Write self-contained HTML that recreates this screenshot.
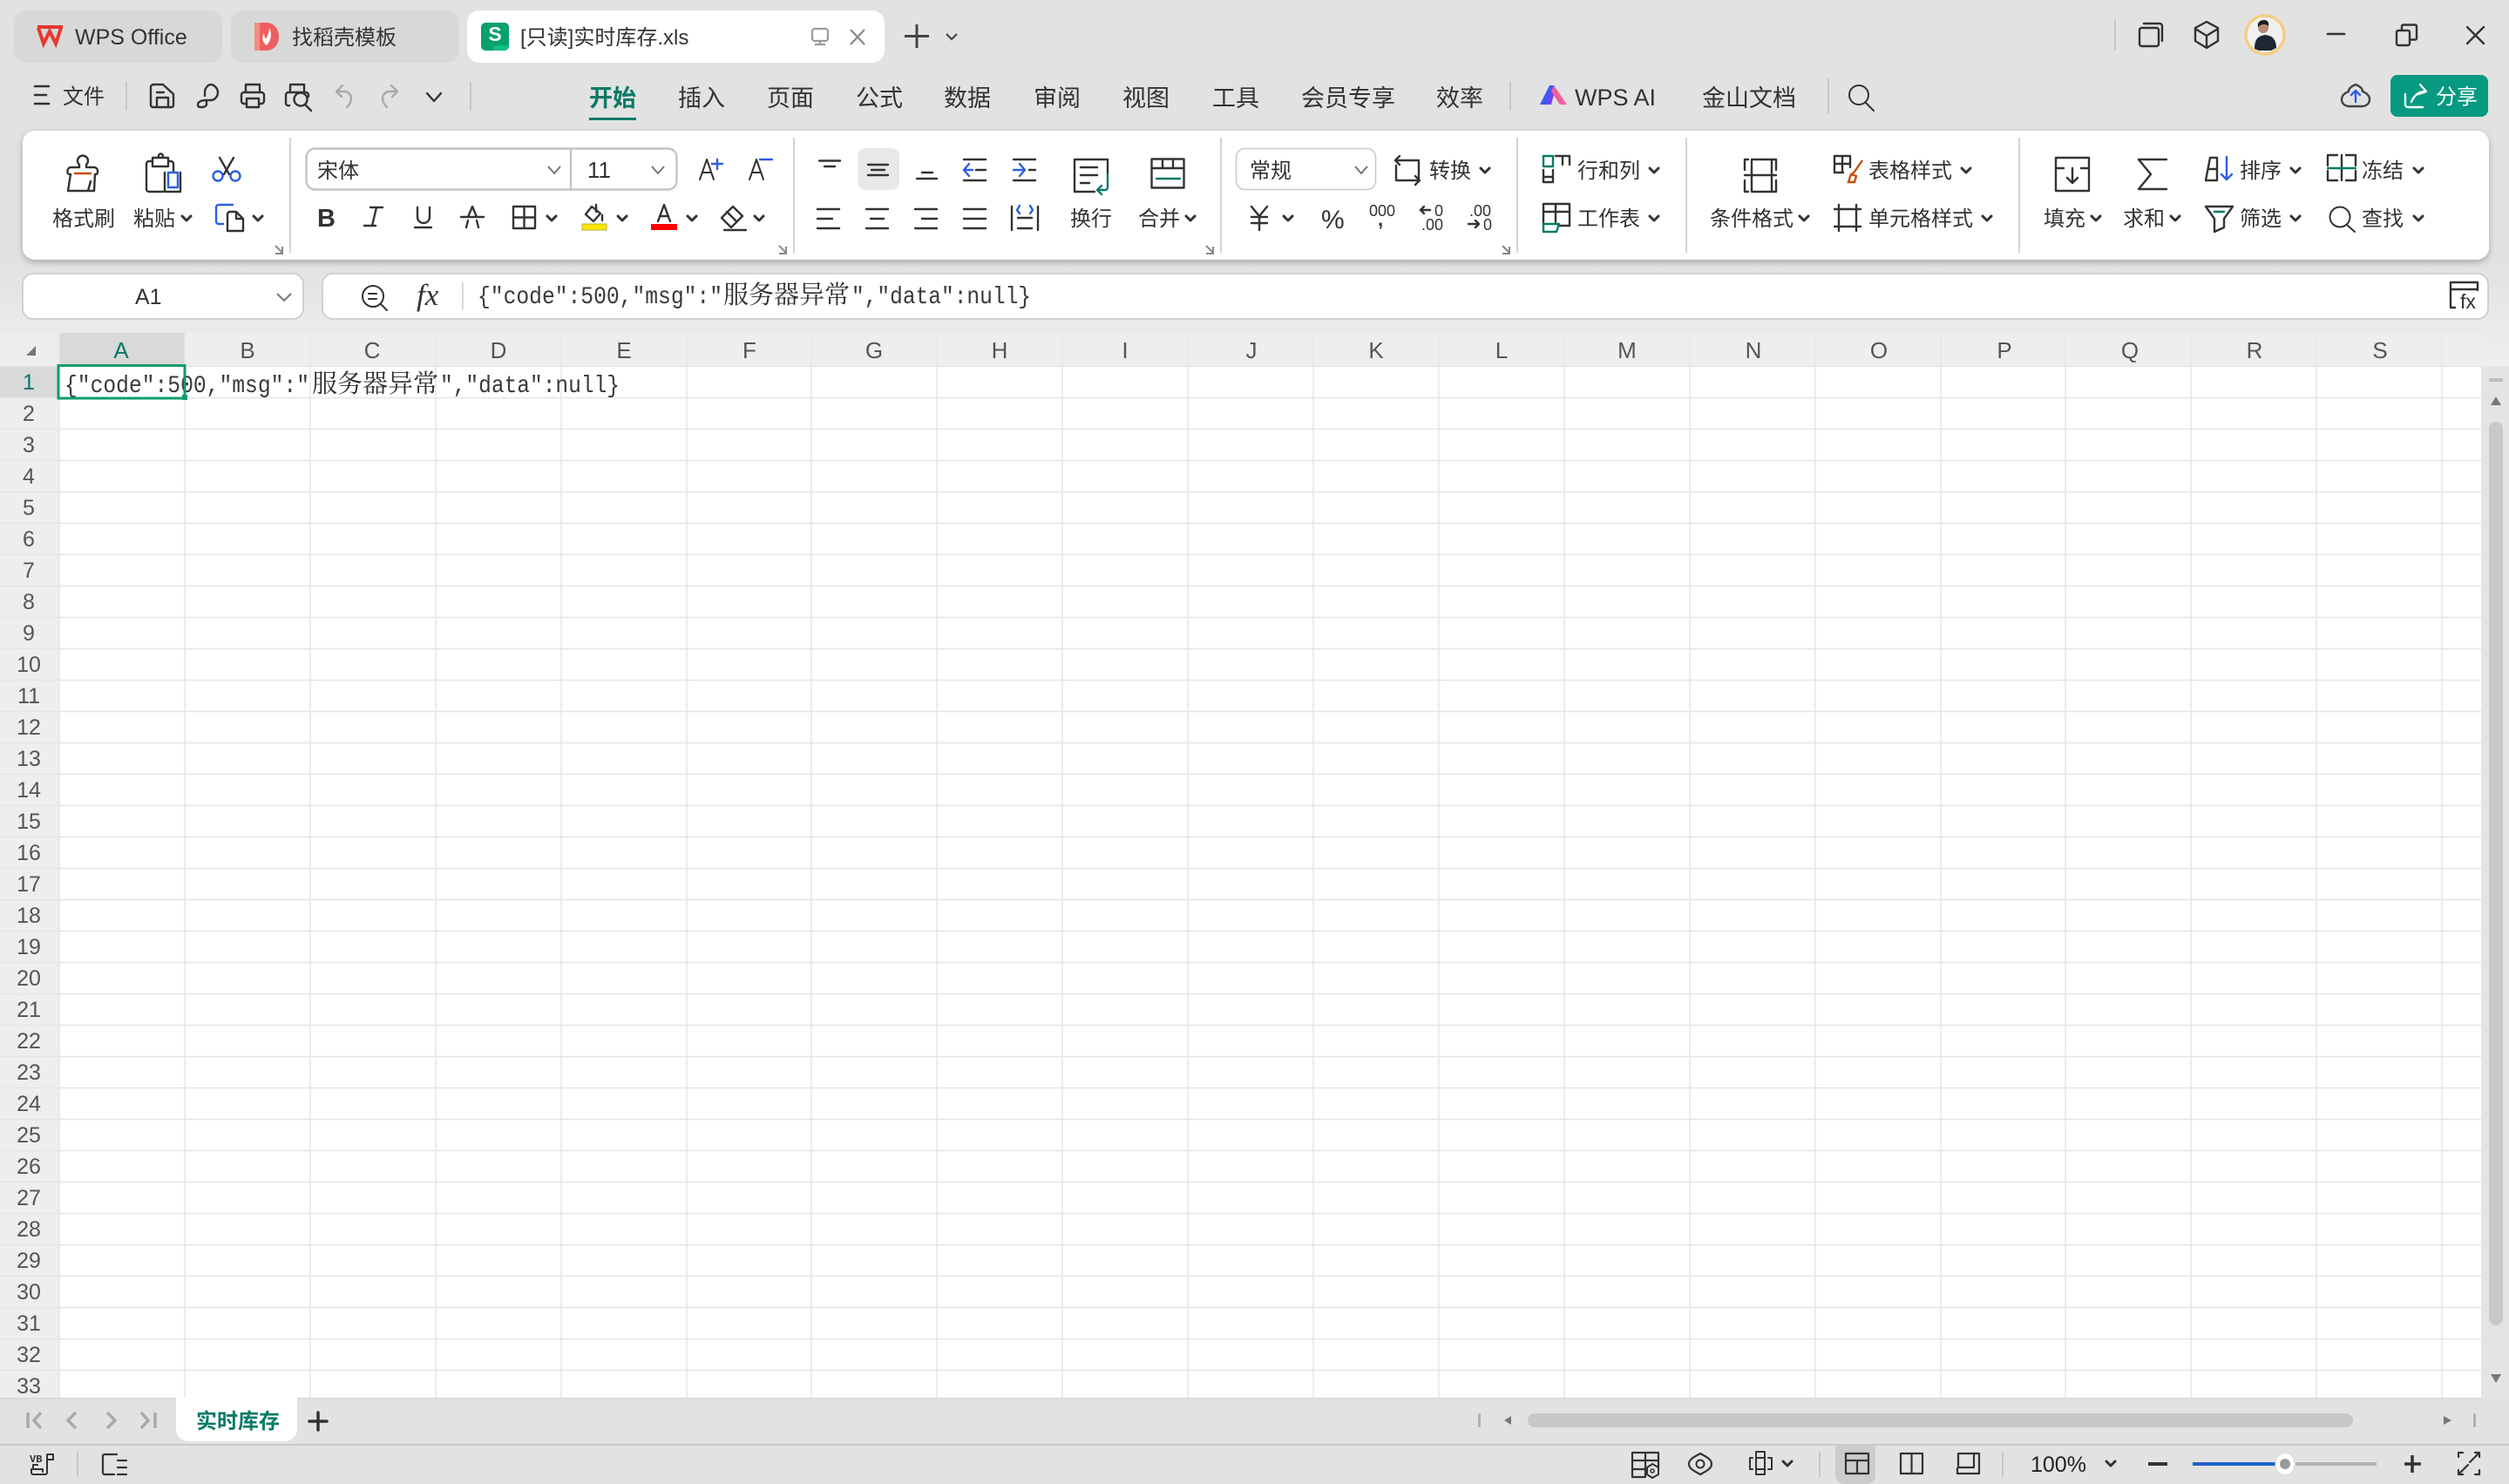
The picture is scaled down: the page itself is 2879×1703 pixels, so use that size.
<!DOCTYPE html>
<html lang="zh-CN"><head><meta charset="utf-8"><title>实时库存.xls</title>
<style>
html,body{margin:0;padding:0;background:#e2e2e2}
svg{display:block}
text{font-family:"Liberation Sans","Noto Sans CJK SC",sans-serif;fill:#333;font-size:24px}
.i{fill:none;stroke:#333;stroke-width:2.4;stroke-linecap:round;stroke-linejoin:round}
.b{fill:none;stroke:#2b5fe0;stroke-width:2.4;stroke-linecap:round;stroke-linejoin:round}
.g{fill:none;stroke:#067a66;stroke-width:2.4;stroke-linecap:round;stroke-linejoin:round}
.m{fill:none;stroke:#c7c7c7;stroke-width:2}
.tab{font-size:27px}
.hd{font-size:26px;text-anchor:middle;fill:#555}
.rn{font-size:25px;text-anchor:middle;fill:#555}
.mono{font-family:"Liberation Mono",monospace;font-size:28px;fill:#3a3a3a}
.cj{font-family:"Liberation Serif","Noto Serif CJK SC",serif;font-size:29px;fill:#2f2f2f}
</style></head><body>
<svg width="2879" height="1703" viewBox="0 0 2879 1703" xmlns="http://www.w3.org/2000/svg">
<defs>
<linearGradient id="bg" x1="0" y1="0" x2="0" y2="1"><stop offset="0" stop-color="#e2e2e2"/><stop offset=".72" stop-color="#e2e2e2"/><stop offset="1" stop-color="#efefef"/></linearGradient>
<filter id="sh" x="-2%" y="-20%" width="104%" height="140%"><feDropShadow dx="0" dy="3" stdDeviation="4" flood-color="#000" flood-opacity=".26"/></filter>
<path id="c" d="M0 0l5 5 5-5" fill="none" stroke="#333" stroke-width="3" stroke-linecap="round" stroke-linejoin="round"/>
</defs>
<rect width="2879" height="420" fill="url(#bg)"/>

<!-- tabs -->
<rect x="16" y="12" width="239" height="60" rx="14" fill="#d8d8d8"/>
<rect x="265" y="12" width="262" height="60" rx="14" fill="#d8d8d8"/>
<rect x="536" y="12" width="479" height="60" rx="14" fill="#fff"/>
<path d="M43 31h29M44 32l6 18 7-14 7 14 6-18" fill="none" stroke="#e8362d" stroke-width="4" stroke-linejoin="miter"/>
<text x="86" y="51" style="font-size:25px">WPS Office</text>
<path d="M292 26h14c8 0 14 7 14 16s-6 16-14 16h-14z" fill="#ee5f5f"/><path d="M292 26h6v32h-6z" fill="#f58a85"/>
<path d="M309 32c3 6 3 13-3 20-5-3-6-9-3-14 0 3 1 5 2 7 2-4 4-8 4-13z" fill="#fff"/>
<text x="335" y="51">找稻壳模板</text>
<rect x="552" y="26" width="32" height="32" rx="5" fill="#07a06f"/><path d="M566 52h18v1a5 5 0 0 1-5 5h-13z" fill="#10bd80"/>
<text x="568" y="47" text-anchor="middle" style="font-size:23px;font-weight:700;fill:#fff">S</text>
<text x="597" y="51" style="font-size:24px">[只读]实时库存.xls</text>
<rect x="932" y="33" width="18" height="14" rx="3" fill="none" stroke="#999" stroke-width="2.2"/><path d="M941 47v4M935 51h12" fill="none" stroke="#999" stroke-width="2.2"/>
<path d="M976 34l16 17M992 34l-16 17" fill="none" stroke="#888" stroke-width="2.2"/>
<path d="M1052 28v27M1038 41.500h28" fill="none" stroke="#444" stroke-width="3"/>
<path d="M1086 39l6 6 6-6" fill="none" stroke="#444" stroke-width="2.2"/>

<!-- title bar right -->
<path d="M2427 22v36" class="m"/>
<rect x="2455" y="32" width="22" height="21" rx="2.500" class="i"/><path d="M2460 27h18a3 3 0 0 1 3 3v17" class="i"/>
<path d="M2532 25l13 7v15l-13 8-13-8v-15zM2519 33l13 8 13-8M2532 41v14" class="i"/>
<circle cx="2599" cy="40" r="22" fill="#f1f1f1" stroke="#f5cd85" stroke-width="3.500"/>
<path d="M2587 56c0-8 2-13 8-15l4-1 5 1c6 2 8 8 8 14l-6 3h-14z" fill="#1c2733"/>
<circle cx="2597" cy="32" r="6" fill="#b98a72"/><path d="M2591 31c-1-6 3-8 7-8s6 3 5 7c-3-3-8-3-12 1z" fill="#1d1d1d"/>
<path d="M2671 39h19" class="i" style="stroke-width:2.600"/>
<rect x="2750" y="35" width="15" height="17" rx="2" class="i"/><path d="M2756 35v-5a1.500 1.500 0 0 1 1.500-1.500h14a1.500 1.500 0 0 1 1.500 1.500v14a1.500 1.500 0 0 1-1.500 1.500h-6.500" class="i"/>
<path d="M2831 31l19 19M2850 31l-19 19" class="i"/>

<!-- menu row -->
<path d="M40 99h16M40 109h13M40 119h16" class="i" style="stroke-width:2.600"/>
<text x="72" y="119">文件</text>
<path d="M145 94v33M540 94v33M1733 94v33M2098 90v40" class="m"/>
<path d="M176 97h11l12 11v13a2 2 0 0 1-2 2h-21a3 3 0 0 1-3-2v-21a3 3 0 0 1 3-3zM180 123v-11h13v11M180 106h8" class="i"/>
<path d="M235 110v-4c0-5 4-9 7-9s8 4 8 9-4 9-8 9h-6c-5 0-9 2-9 5s2 3 5 3 5-2 5-3v-5" class="i"/>
<path d="M282 106v-9h16v9M283 119h-3a3 3 0 0 1-3-3v-7a3 3 0 0 1 3-3h20a3 3 0 0 1 3 3v7a3 3 0 0 1-3 3h-3M283 113h14v10h-14z" class="i"/>
<path d="M333 106v-9h16v9M332 121a3 3 0 0 1-4-3v-9a3 3 0 0 1 3-3h20a3 3 0 0 1 3 3v2" class="i"/><circle cx="345" cy="114" r="7.500" class="i"/><path d="M350 120l7 7" class="i"/>
<path d="M393 98l-7 7 6 6M386 105h9a8 8 0 0 1 8 8c0 3-2 7-5 10" fill="none" stroke="#aaa" stroke-width="2.400" stroke-linecap="round" stroke-linejoin="round"/>
<path d="M449 98l7 7-6 6M456 105h-9a8 8 0 0 0-8 8c0 3 2 7 5 10" fill="none" stroke="#aaa" stroke-width="2.400" stroke-linecap="round" stroke-linejoin="round"/>
<path d="M490 107l8 9 8-9" class="i"/>

<text x="676" y="122" class="tab" style="font-weight:700;fill:#067a66">开始</text>
<rect x="676" y="135" width="54" height="3" fill="#067a66"/>
<text x="778" y="122" class="tab">插入</text>
<text x="880" y="122" class="tab">页面</text>
<text x="982" y="122" class="tab">公式</text>
<text x="1083" y="122" class="tab">数据</text>
<text x="1186" y="122" class="tab">审阅</text>
<text x="1288" y="122" class="tab">视图</text>
<text x="1391" y="122" class="tab">工具</text>
<text x="1493" y="122" class="tab">会员专享</text>
<text x="1648" y="122" class="tab">效率</text>
<path d="M1767 120l11-22h6l-9 22z" fill="#3b5bf5"/><path d="M1783 98l15 22h-8l-10-15z" fill="#ef5fa0"/><path d="M1775 120l5-15 3 4-3 11z" fill="#7a3ff0"/>
<text x="1807" y="121" class="tab">WPS AI</text>
<text x="1953" y="122" class="tab">金山文档</text>
<circle cx="2133" cy="109" r="11" class="i" style="stroke-width:2"/><path d="M2141 118l9 9" class="i" style="stroke-width:2"/>

<path d="M2703 97c-5 2-8 5-8 8-5 2-8 5-8 9 0 5 4 8 9 8h14c5 0 9-3 9-8 0-4-3-7-8-9 0-3-3-6-8-8z" class="i" style="stroke:#444"/>
<path d="M2703 117v-13M2698 109l5-5 5 5" class="b"/>
<rect x="2743" y="86" width="112" height="48" rx="8" fill="#069a80"/>
<path d="M2777 97l7 8-9 3M2784 105c-8 0-14 4-17 12M2760 108v12a3 3 0 0 0 3 3h17" fill="none" stroke="#fff" stroke-width="2.400" stroke-linecap="round" stroke-linejoin="round"/>
<text x="2795" y="119" style="fill:#fff">分享</text>

<!-- ribbon -->
<rect x="26" y="150" width="2830" height="148" rx="14" fill="#fff" filter="url(#sh)"/>
<path d="M333 158v132M911 158v132M1401 158v132M1741 158v132M1935 158v132M2317 158v132" fill="none" stroke="#d4d4d4" stroke-width="2"/>
<!-- launchers -->
<path d="M316 282l8 8M324 283v8h-8M894 282l8 8M902 283v8h-8M1384 282l8 8M1392 283v8h-8M1724 282l8 8M1732 283v8h-8" fill="none" stroke="#888" stroke-width="2"/>

<!-- clipboard -->
<path d="M91 192v-3a6 6 0 1 1 8 0v3h9a4 4 0 0 1 4 4v2a2 2 0 0 1-2 2h-1l-1 19H78l3-19h-1a2.500 2.500 0 0 1-2.500-2.500v-1.500a4 4 0 0 1 4-4zM104 208l-3 11" class="i"/>
<path d="M85 199h20" fill="none" stroke="#c24e12" stroke-width="2.400"/>
<text x="60" y="259">格式刷</text>
<path d="M175 185h-4a3 3 0 0 0-3 3v29a3 3 0 0 0 3 3h16M193 185h3a3 3 0 0 1 3 3v10M175 181h18v10h-18zM182 181v-2a2 2 0 0 1 5 0v2M189 198v22h18v-22" class="i"/>
<rect x="193" y="198" width="11" height="17" class="b"/>
<text x="153" y="259">粘贴</text><use href="#c" x="209" y="248"/>
<circle cx="250" cy="202" r="5.500" class="b"/><circle cx="270" cy="202" r="5.500" class="b"/>
<path d="M252 181l11 19M268 181l-11 19" class="i"/>
<path d="M267 235h-16a3 3 0 0 0-3 3v16a3 3 0 0 0 3 3h5" class="b"/>
<path d="M263 243h8l8 8v14h-18v-20zM271 243v8h8" class="i"/>
<use href="#c" x="291" y="248"/>

<!-- font -->
<rect x="351.500" y="170.500" width="425" height="47" rx="10" fill="#fff" stroke="#c4c4c4" stroke-width="2.400"/>
<path d="M655 171v46" stroke="#c4c4c4" stroke-width="2.400"/>
<text x="364" y="204">宋体</text>
<path d="M629 191l7 8 7-8M748 191l7 8 7-8" fill="none" stroke="#777" stroke-width="2"/>
<text x="674" y="204" style="font-size:26px">11</text>
<path d="M803 206l8-23 8 23M806 198h10M860 206l8-23 8 23M863 198h10" class="i" style="stroke-width:2"/>
<path d="M823 183v11M817 188h12M872 183h14" class="b"/>
<text x="364" y="260" style="font-size:29px;font-weight:700">B</text>
<path d="M425 238h14M432 238l-5 21M418 259h13" class="i"/>
<path d="M479 238v11a7 7 0 0 0 14 0v-11M476 261h19" class="i"/>
<path d="M537 249l5-12 5 12M535 261l2-8M549 261l-2-8M529 249h26" class="i"/>
<path d="M589 237h25v25h-25zM589 249.500h25M601.500 237v25" class="i"/><use href="#c" x="628" y="248"/>
<path d="M679 237l10 8-8 9-9-8zM684 235v8" class="i"/><path d="M691 247v6" class="i"/>
<rect x="668" y="257" width="28" height="7" fill="#ffe600" stroke="#b8b04a" stroke-width="1"/><use href="#c" x="709" y="248"/>
<path d="M755 254l7-19 7 19M757 248h10" class="i"/><rect x="747" y="257" width="30" height="7" fill="#f00"/><use href="#c" x="789" y="248"/>
<path d="M841 237l11 11-13 13-11-11zM834 243l11 11M831 264h25" class="i"/><use href="#c" x="866" y="248"/>

<!-- align -->
<rect x="984" y="170" width="48" height="48" rx="9" fill="#e8e8e8"/>
<path d="M940 184.500h24M946 191h12M996 189h23M1000 195h15M996 201h23M1058 198h12M1052 205h23" class="i"/>
<path d="M1106 183h25M1120 195h11M1106 207h25M1163 183h25M1181 195h7M1163 207h25" class="i"/>
<path d="M1116 195h-10M1112 188l-6 7 6 7M1163 195h12M1170 188l6 7-6 7" class="b"/>
<path d="M1271 200v-17h-38v37h23M1240 192h19M1240 201h19M1240 210h10" class="i"/>
<path d="M1271 200v15a3 3 0 0 1-3 3h-9M1264 213l-5 5 5 5" class="g"/>
<text x="1228" y="259">换行</text>
<path d="M1321.500 182.500h37v33h-37zM1321.500 193h37M1334 182.500v10.500M1346 182.500v10.500" class="i"/>
<path d="M1327 205h27" class="g"/>
<text x="1306" y="259">合并</text><use href="#c" x="1361" y="248"/>
<path d="M938 240h25M938 251h17M938 262h25M994 240h25M999 251h15M994 262h25M1050 240h25M1058 251h17M1050 262h25M1106 240h25M1106 251h25M1106 262h25" class="i"/>
<path d="M1161 237v27M1191 237v27M1168 250h16M1168 262h16" class="i"/><path d="M1170 236l-3 5 3 4M1182 236l3 5-3 4" class="b"/>

<!-- number -->
<rect x="1418.500" y="170.500" width="160" height="47" rx="10" fill="#fff" stroke="#c8c8c8" stroke-width="1.500"/>
<text x="1434" y="204">常规</text>
<path d="M1555 191l7 8 7-8" fill="none" stroke="#777" stroke-width="2"/>
<path d="M1606 179l-5 5 5 5M1602 184h26v22M1602 190v17h26M1624 202l5 5-5 5" class="i"/>
<text x="1640" y="204">转换</text><use href="#c" x="1699" y="193"/>
<path d="M1436 237l9 11 9-11M1445 248v16M1436 249h18M1436 256h18" class="i"/><use href="#c" x="1473" y="248"/>
<text x="1516" y="262" style="font-size:30px">%</text>
<text x="1571" y="248" style="font-size:18px">000</text><text x="1581" y="259" style="font-size:22px;font-weight:700">,</text>
<path d="M1641 241h-11M1634 237l-4 4 4 4" class="i"/><text x="1646" y="248" style="font-size:18px">0</text><text x="1631" y="264" style="font-size:18px">.00</text>
<text x="1686" y="248" style="font-size:18px">.00</text><path d="M1685 257h12M1693 253l4 4-4 4" class="i"/><text x="1702" y="264" style="font-size:18px">0</text>

<!-- row col / sheet -->
<rect x="1771" y="179" width="11" height="12" class="g"/>
<path d="M1785 179h16v10M1793 179v10M1771 195v14h11v-14M1771 203h11" class="i"/>
<text x="1810" y="204">行和列</text><use href="#c" x="1893" y="193"/>
<path d="M1771 257v-23h30v25h-13M1771 243h30M1785 234v21" class="i"/>
<path d="M1771 257h18l-3 9h-15z" class="g"/>
<text x="1810" y="259">工作表</text><use href="#c" x="1893" y="248"/>

<!-- conditional -->
<path d="M2006 183h-4v12M2002 207v13h4M2034 183h4v12M2038 207v13h-4M2010 183h23v18h-31M2010 183v37M2010 220h23v-19M2033 201h5" class="i"/>
<text x="1962" y="259">条件格式</text><use href="#c" x="2065" y="248"/>
<path d="M2123 192v-13h-18v19h10M2105 188h18M2114 179v19" class="i"/>
<path d="M2137 184l-9 13-3 3" fill="none" stroke="#c24e12" stroke-width="2.400"/><path d="M2121 209l3-9 6 2-2 7z" fill="none" stroke="#c24e12" stroke-width="2.400"/>
<text x="2144" y="204">表格样式</text><use href="#c" x="2251" y="193"/>
<path d="M2110 235v30M2130 235v30M2105 240h30M2105 260h30" class="i"/>
<text x="2144" y="259">单元格样式</text><use href="#c" x="2275" y="248"/>

<!-- editing -->
<path d="M2359 181h38v38h-38zM2359 193h9M2388 193h9M2378 193v17M2372 204l6 6 6-6" class="i"/>
<text x="2345" y="259">填充</text><use href="#c" x="2400" y="248"/>
<path d="M2486 183h-32l14 17-14 17h32" class="i"/>
<text x="2436" y="259">求和</text><use href="#c" x="2491" y="248"/>
<path d="M2531 207l5-26h8v26zM2534 194h10" class="i"/><path d="M2555 180v26M2549 200l6 6 6-6" class="b"/>
<text x="2570" y="204">排序</text><use href="#c" x="2629" y="193"/>
<path d="M2671 190v-12h11M2692 178h11v12M2671 196v11h11M2692 207h11v-11M2687 178v29" class="i"/><path d="M2671 193h32" class="g"/>
<text x="2710" y="204">冻结</text><use href="#c" x="2770" y="193"/>
<path d="M2531 237h31l-10 14v10l-11 5v-15z" class="i"/><path d="M2541 243h11" class="g"/>
<text x="2570" y="259">筛选</text><use href="#c" x="2629" y="248"/>
<circle cx="2685" cy="249" r="11.500" class="i" style="stroke-width:2"/><path d="M2693 258l9 8" class="i" style="stroke-width:2"/>
<text x="2710" y="259">查找</text><use href="#c" x="2770" y="248"/>

<!-- name + formula -->
<rect x="26" y="314" width="322" height="52" rx="12" fill="#fff" stroke="#c9c9c9" stroke-width="1.600"/>
<text x="155" y="349" style="font-size:25px">A1</text>
<path d="M318 337l8 8 8-8" fill="none" stroke="#777" stroke-width="2"/>
<rect x="370" y="314" width="2485" height="52" rx="12" fill="#fff" stroke="#c9c9c9" stroke-width="1.600"/>
<circle cx="428" cy="340" r="12" class="i" style="stroke-width:2"/><path d="M423 337h9M423 343h9M437 349l7 7" class="i" style="stroke-width:2"/>
<text x="478" y="350" style="font-family:'Liberation Serif',serif;font-style:italic;font-size:35px">fx</text>
<path d="M531 324v31" stroke="#ccc" stroke-width="1.500"/>
<text x="548" y="348" class="mono" textLength="281" lengthAdjust="spacingAndGlyphs">{"code":500,"msg":"</text>
<text x="830" y="348" class="cj">服务器异常</text>
<text x="977" y="348" class="mono" textLength="206" lengthAdjust="spacingAndGlyphs">","data":null}</text>
<path d="M2817 353h-5v-29h31v9M2812 332h31" class="i"/>
<text x="2823" y="354" style="font-size:23px">fx</text>

<!-- sheet -->
<rect x="0" y="382" width="2847" height="38" fill="#eee"/>
<rect x="0" y="420" width="68" height="1184" fill="#eee"/>
<rect x="68" y="420" width="2779" height="1184" fill="#fff"/>
<rect x="68" y="382" width="144" height="38" fill="#d9d9d9"/>
<rect x="0" y="420" width="68" height="37" fill="#d9d9d9"/>
<path d="M41 397v11h-11z" fill="#777"/>
<path d="M68 382V1604M212 382V1604M356 382V1604M500 382V1604M644 382V1604M788 382V1604M931 382V1604M1075 382V1604M1219 382V1604M1363 382V1604M1507 382V1604M1651 382V1604M1795 382V1604M1939 382V1604M2083 382V1604M2227 382V1604M2370 382V1604M2514 382V1604M2658 382V1604M2802 382V1604" fill="none" stroke="#e5e5e5" stroke-width="1.500"/>
<path d="M0 420.500H2847M0 456.500H2847M0 492.500H2847M0 528.500H2847M0 564.500H2847M0 600.500H2847M0 636.500H2847M0 672.500H2847M0 708.500H2847M0 744.500H2847M0 780.500H2847M0 816.500H2847M0 852.500H2847M0 888.500H2847M0 924.500H2847M0 960.500H2847M0 996.500H2847M0 1032.500H2847M0 1068.500H2847M0 1104.500H2847M0 1140.500H2847M0 1176.500H2847M0 1212.500H2847M0 1248.500H2847M0 1284.500H2847M0 1320.500H2847M0 1356.500H2847M0 1392.500H2847M0 1428.500H2847M0 1464.500H2847M0 1500.500H2847M0 1536.500H2847M0 1572.500H2847" fill="none" stroke="#e5e5e5" stroke-width="1.500"/>
<text x="139" y="411" class="hd" style="fill:#067a66">A</text><text x="284" y="411" class="hd">B</text><text x="427" y="411" class="hd">C</text><text x="572" y="411" class="hd">D</text><text x="716" y="411" class="hd">E</text><text x="860" y="411" class="hd">F</text><text x="1003" y="411" class="hd">G</text><text x="1147" y="411" class="hd">H</text><text x="1291" y="411" class="hd">I</text><text x="1436" y="411" class="hd">J</text><text x="1579" y="411" class="hd">K</text><text x="1723" y="411" class="hd">L</text><text x="1867" y="411" class="hd">M</text><text x="2012" y="411" class="hd">N</text><text x="2156" y="411" class="hd">O</text><text x="2300" y="411" class="hd">P</text><text x="2444" y="411" class="hd">Q</text><text x="2587" y="411" class="hd">R</text><text x="2731" y="411" class="hd">S</text>
<g class="rows">
<text x="33" y="447" class="rn" style="fill:#067a66">1</text><text x="33" y="483" class="rn">2</text><text x="33" y="519" class="rn">3</text><text x="33" y="555" class="rn">4</text><text x="33" y="591" class="rn">5</text><text x="33" y="627" class="rn">6</text><text x="33" y="663" class="rn">7</text><text x="33" y="699" class="rn">8</text><text x="33" y="735" class="rn">9</text><text x="33" y="771" class="rn">10</text><text x="33" y="807" class="rn">11</text><text x="33" y="843" class="rn">12</text><text x="33" y="879" class="rn">13</text><text x="33" y="915" class="rn">14</text><text x="33" y="951" class="rn">15</text><text x="33" y="987" class="rn">16</text><text x="33" y="1023" class="rn">17</text><text x="33" y="1059" class="rn">18</text><text x="33" y="1095" class="rn">19</text><text x="33" y="1131" class="rn">20</text><text x="33" y="1167" class="rn">21</text><text x="33" y="1203" class="rn">22</text><text x="33" y="1239" class="rn">23</text><text x="33" y="1275" class="rn">24</text><text x="33" y="1311" class="rn">25</text><text x="33" y="1347" class="rn">26</text><text x="33" y="1383" class="rn">27</text><text x="33" y="1419" class="rn">28</text><text x="33" y="1455" class="rn">29</text><text x="33" y="1491" class="rn">30</text><text x="33" y="1527" class="rn">31</text><text x="33" y="1563" class="rn">32</text><text x="33" y="1599" class="rn">33</text>
</g>
<text x="74" y="450" class="mono" textLength="281" lengthAdjust="spacingAndGlyphs">{"code":500,"msg":"</text>
<text x="358" y="450" class="cj">服务器异常</text>
<text x="505" y="450" class="mono" textLength="206" lengthAdjust="spacingAndGlyphs">","data":null}</text>
<rect x="67" y="419.500" width="145" height="37.500" fill="none" stroke="#0f9b6c" stroke-width="3"/>
<rect x="209" y="453" width="6" height="6" fill="#0f9b6c"/>

<!-- v scrollbar -->
<rect x="2847" y="420" width="32" height="1184" fill="#e4e4e4"/>
<rect x="2856" y="434" width="16" height="4" rx="2" fill="#bdbdbd"/>
<path d="M2864 455l6 10h-12z" fill="#777"/>
<rect x="2856" y="484" width="16" height="1037" rx="8" fill="#c8c8c8"/>
<path d="M2858 1577h12l-6 10z" fill="#777"/>

<!-- bottom bars -->
<rect x="0" y="1604" width="2879" height="99" fill="#e2e2e2"/>
<rect x="0" y="1604" width="2847" height="1.500" fill="#d6d6d6"/>
<rect x="0" y="1657" width="2879" height="2" fill="#c8c8c8"/>
<path d="M202 1604h139v36a14 14 0 0 1-14 14h-111a14 14 0 0 1-14-14z" fill="#fff"/>
<text x="225" y="1639" style="font-weight:700;fill:#067a66">实时库存</text>
<path d="M365 1621v20M355 1631h20" fill="none" stroke="#333" stroke-width="3.500" stroke-linecap="round"/>
<path d="M32 1621v18M47 1621l-8 9 8 9M87 1621l-9 9 9 9M123 1621l9 9-9 9M162 1621l8 9-8 9M178 1621v18" fill="none" stroke="#aaa" stroke-width="3.500"/>
<rect x="1696" y="1622" width="3" height="16" rx="1.500" fill="#b0b0b0"/>
<path d="M1734 1625v10l-8-5z" fill="#777"/>
<rect x="1753" y="1622" width="947" height="16" rx="8" fill="#c8c8c8"/>
<path d="M2804 1625v10l9-5z" fill="#777"/>
<rect x="2838" y="1622" width="3" height="16" rx="1.500" fill="#b0b0b0"/>

<!-- status -->
<text x="34" y="1678" style="font-family:'Liberation Mono',monospace;font-size:12px;font-weight:700">VB</text>
<path d="M54 1669h7v6h-6M54 1669v21a2 2 0 0 1-2 2h-14a2 2 0 0 1-2-2v-4h13v3M38 1686v-5h5" class="i" style="stroke-width:2"/>
<path d="M89 1666v29M2088 1666v29M2298 1666v29" class="m"/>
<path d="M134 1669h-14a2 2 0 0 0-2 2v19a2 2 0 0 0 2 2h11M135 1676h10M135 1684h10M135 1692h10" class="i" style="stroke-width:2.200"/>
<path d="M1903 1683v-16h-30v28h14M1873 1676h30M1873 1686h14M1888 1667v28" class="i" style="stroke-width:2.200"/>
<path d="M1896 1680l7 4v8l-7 4-6-4v-8z" class="i" style="stroke-width:2"/><circle cx="1896" cy="1688" r="2" class="i" style="stroke-width:1.500"/>
<path d="M1951 1668c5 3 13 6 13 12s-8 9-13 12c-5-3-13-6-13-12s8-9 13-12z" class="i" style="stroke-width:2.200"/><circle cx="1951" cy="1680" r="4.500" class="i" style="stroke-width:2"/>
<path d="M2015 1673v-7h10v7M2015 1686v6h10v-6M2011 1673h-3v13h3M2029 1673h4v13h-4M2015 1673h10v13h-10z" class="i" style="stroke-width:2"/>
<use href="#c" x="2046" y="1677"/>
<path d="M2106 1657h46v36a10 10 0 0 1-10 10h-26a10 10 0 0 1-10-10z" fill="#ccc"/>
<path d="M2118 1668h26v23h-26zM2118 1676h26M2131 1676v15" class="i" style="stroke-width:2.200"/>
<path d="M2181 1668h25v23h-25zM2193.500 1668v23" class="i" style="stroke-width:2.200"/>
<path d="M2247 1668h18v16h-18zM2265 1668h6v23h-25v-6" class="i" style="stroke-width:2.200"/>
<text x="2330" y="1689" style="font-size:25px;fill:#222">100%</text>
<use href="#c" x="2417" y="1677"/>
<path d="M2465 1680h22" fill="none" stroke="#333" stroke-width="4"/>
<rect x="2516" y="1678" width="96" height="4" fill="#1e62c8"/>
<rect x="2634" y="1678" width="93" height="4" fill="#b0b0b0"/>
<ellipse cx="2622" cy="1680" rx="11" ry="12.500" fill="#fff" stroke="#ddd" stroke-width="1"/>
<ellipse cx="2622" cy="1680" rx="6" ry="6" fill="#9a9a9a"/>
<path d="M2768 1670v20M2759 1680h19" fill="none" stroke="#333" stroke-width="3.500"/>
<path d="M2826 1667h-5v5M2840 1667h5v5M2826 1692h-5v-5M2845 1687v5h-5M2843 1669l-9 9M2823 1690l9-9" class="i" style="stroke-width:2.200"/>
</svg>
</body></html>
